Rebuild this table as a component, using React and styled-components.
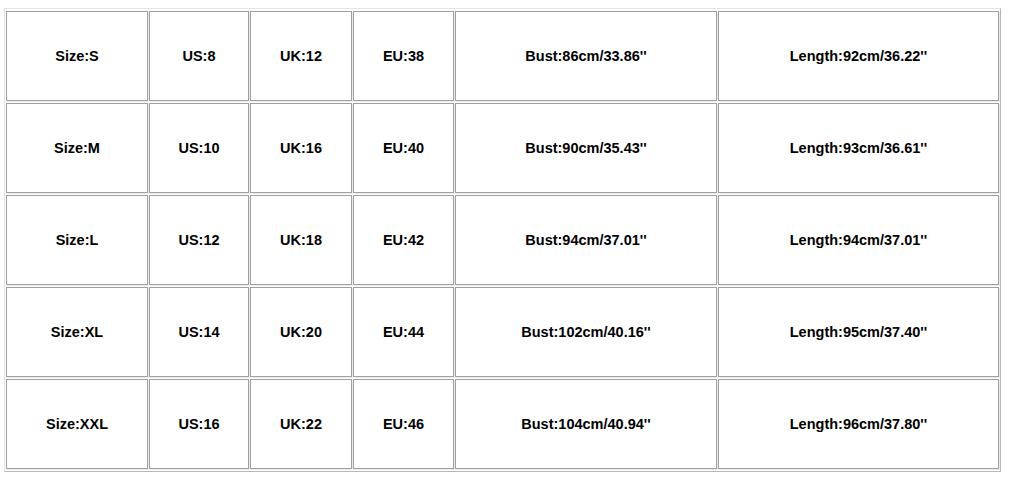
import styled, { createGlobalStyle } from "styled-components";

const rows = [
  ["Size:S", "US:8", "UK:12", "EU:38", "Bust:86cm/33.86''", "Length:92cm/36.22''"],
  ["Size:M", "US:10", "UK:16", "EU:40", "Bust:90cm/35.43''", "Length:93cm/36.61''"],
  ["Size:L", "US:12", "UK:18", "EU:42", "Bust:94cm/37.01''", "Length:94cm/37.01''"],
  ["Size:XL", "US:14", "UK:20", "EU:44", "Bust:102cm/40.16''", "Length:95cm/37.40''"],
  ["Size:XXL", "US:16", "UK:22", "EU:46", "Bust:104cm/40.94''", "Length:96cm/37.80''"],
];

const widths = [142, 100, 102, 101, 262, 281];

export default function App() {
  return (
    <>
      <Global />
      <Table>
        <colgroup>
          {widths.map((w, i) => (
            <col key={i} style={{ width: w }} />
          ))}
        </colgroup>
        <tbody>
          {rows.map((r, i) => (
            <tr key={i}>
              {r.map((c, j) => (
                <Cell key={j}>{c}</Cell>
              ))}
            </tr>
          ))}
        </tbody>
      </Table>
    </>
  );
}

const Global = createGlobalStyle`
  body {
    margin: 0;
    background: #ffffff;
    font-family: "Liberation Sans", Arial, sans-serif;
  }
`;

const Table = styled.table`
  margin: 8px 0 0 4px;
  table-layout: fixed;
  border-collapse: separate;
  border-spacing: 1px 2px;
  border: 1px solid #e4e4e4;
  border-right-color: #b8b8b8;
  border-bottom-color: #b8b8b8;
`;

const Cell = styled.td`
  height: 90px;
  box-sizing: border-box;
  padding: 0;
  border: 1px solid #a0a0a0;
  box-shadow: 1px 1px 0 #ececec;
  text-align: center;
  vertical-align: middle;
  font-size: 14.5px;
  font-weight: bold;
  color: #000;
`;
